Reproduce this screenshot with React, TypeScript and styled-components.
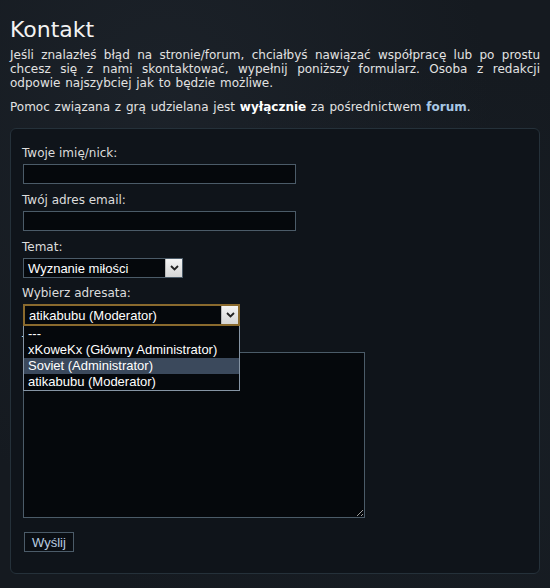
import React from 'react';
import styled, { createGlobalStyle } from 'styled-components';

const GlobalStyle = createGlobalStyle`
  html, body {
    margin: 0;
    padding: 0;
    background: #161b21;
  }
  body {
    width: 550px;
    height: 588px;
    overflow: hidden;
    font-family: "DejaVu Sans", Verdana, sans-serif;
    color: #e2e2e2;
  }
`;

const Page = styled.div`
  width: 550px;
  height: 588px;
  box-sizing: border-box;
  padding: 10px 10px 0 10px;
  background:
    radial-gradient(ellipse at 30% 20%, rgba(40, 48, 58, 0.35), transparent 60%),
    radial-gradient(ellipse at 80% 70%, rgba(30, 38, 46, 0.35), transparent 60%),
    #151a20;
`;

const Title = styled.h1`
  margin: 5px 0 3px 0;
  font-size: 22px;
  font-weight: normal;
  line-height: 30px;
  color: #f2f2f2;
`;

const Paragraph = styled.p`
  margin: 0 0 10px 0;
  font-size: 12px;
  line-height: 14px;
  word-spacing: 1px;
  text-align: justify;
  color: #e2e2e2;
`;

const Strong = styled.b`
  color: #ffffff;
`;

const ForumLink = styled.a`
  color: #a8c8e6;
  font-weight: bold;
  text-decoration: none;
`;

const FormBox = styled.form`
  margin-top: 14px;
  width: 530px;
  height: 446px;
  box-sizing: border-box;
  border: 1px solid #25313a;
  border-radius: 6px;
  background: #0f141a;
  padding: 18px 12px 0 12px;
  display: flex;
  flex-direction: column;
`;

const Field = styled.div<{ $gap?: number; $raised?: boolean }>`
  display: flex;
  flex-direction: column;
  align-items: flex-start;
  margin-bottom: ${(p) => p.$gap ?? 10}px;
  position: relative;
  z-index: ${(p) => (p.$raised ? 2 : 'auto')};
`;

const Label = styled.label`
  font-size: 12px;
  line-height: 13px;
  color: #dcdcdc;
  margin-bottom: 4px;
  margin-left: -1px;
`;

const TextInput = styled.input`
  width: 273px;
  height: 20px;
  box-sizing: border-box;
  margin: 0;
  border: 1px solid #4b5b68;
  background: #05080c;
  color: #fff;
  outline: none;
`;

const SelectWrap = styled.div`
  position: relative;
`;

const SelectBox = styled.div<{ $width: number; $focused?: boolean }>`
  width: ${(p) => p.$width}px;
  height: ${(p) => (p.$focused ? 22 : 20)}px;
  box-sizing: border-box;
  border: ${(p) => (p.$focused ? '2px solid #8a6a2e' : '1px solid #4b5b68')};
  background: #05080c;
  display: flex;
  align-items: stretch;
  font-family: "Liberation Sans", Arial, sans-serif;
  font-size: 13px;
  color: #ffffff;
`;

const SelectValue = styled.span`
  flex: 1;
  padding-left: 4px;
  display: flex;
  align-items: center;
`;

const ArrowButton = styled.span`
  width: 16px;
  display: flex;
  align-items: center;
  justify-content: center;
  background: linear-gradient(#f4f4f4, #d6d6d6);
  border-left: 1px solid #b8b8b8;
`;

const OptionList = styled.ul`
  position: absolute;
  left: 0;
  top: 100%;
  z-index: 2;
  width: 217px;
  box-sizing: border-box;
  margin: 0;
  padding: 0;
  list-style: none;
  border: 1px solid #8594a4;
  border-top: none;
  background: #05080c;
  font-family: "Liberation Sans", Arial, sans-serif;
  font-size: 13px;
`;

const Option = styled.li<{ $active?: boolean }>`
  height: 16px;
  line-height: 16px;
  padding-left: 4px;
  color: #ffffff;
  background: ${(p) => (p.$active ? '#3b495c' : 'transparent')};
`;

const TextArea = styled.textarea`
  width: 342px;
  height: 166px;
  box-sizing: border-box;
  margin: 0;
  border: 1px solid #4b5b68;
  background: #05080c;
  color: #fff;
  outline: none;
  resize: both;
`;

const SubmitButton = styled.button`
  margin-top: 14px;
  margin-left: 1px;
  width: 50px;
  height: 20px;
  box-sizing: border-box;
  border: 1px solid #4b5b68;
  background: #0a0e13;
  color: #b8cce0;
  font-family: "Liberation Sans", Arial, sans-serif;
  font-size: 13px;
  padding: 0;
`;

const Chevron = () => (
  <svg width="9" height="6" viewBox="0 0 9 6">
    <path d="M1 1 L4.5 4.5 L8 1" stroke="#222" strokeWidth="1.8" fill="none" />
  </svg>
);

const recipients = [
  '---',
  'xKoweKx (Główny Administrator)',
  'Soviet (Administrator)',
  'atikabubu (Moderator)',
];

export default function App() {
  return (
    <Page>
      <GlobalStyle />
      <Title>Kontakt</Title>
      <Paragraph>
        Jeśli znalazłeś błąd na stronie/forum, chciałbyś nawiązać współpracę lub po prostu
        chcesz się z nami skontaktować, wypełnij poniższy formularz. Osoba z redakcji
        odpowie najszybciej jak to będzie możliwe.
      </Paragraph>
      <Paragraph>
        Pomoc związana z grą udzielana jest <Strong>wyłącznie</Strong> za pośrednictwem{' '}
        <ForumLink href="#">forum</ForumLink>.
      </Paragraph>
      <FormBox onSubmit={(e) => e.preventDefault()}>
        <Field>
          <Label>Twoje imię/nick:</Label>
          <TextInput type="text" />
        </Field>
        <Field>
          <Label>Twój adres email:</Label>
          <TextInput type="text" />
        </Field>
        <Field $gap={9}>
          <Label>Temat:</Label>
          <SelectBox $width={160}>
            <SelectValue>Wyznanie miłości</SelectValue>
            <ArrowButton>
              <Chevron />
            </ArrowButton>
          </SelectBox>
        </Field>
        <Field $gap={9} $raised>
          <Label>Wybierz adresata:</Label>
          <SelectWrap>
            <SelectBox $width={217} $focused>
              <SelectValue>atikabubu (Moderator)</SelectValue>
              <ArrowButton>
                <Chevron />
              </ArrowButton>
            </SelectBox>
            <OptionList>
              {recipients.map((r) => (
                <Option key={r} $active={r === 'Soviet (Administrator)'}>
                  {r}
                </Option>
              ))}
            </OptionList>
          </SelectWrap>
        </Field>
        <Field $gap={0}>
          <Label>Treść wiadomości:</Label>
          <TextArea />
        </Field>
        <div>
          <SubmitButton type="submit">Wyślij</SubmitButton>
        </div>
      </FormBox>
    </Page>
  );
}
